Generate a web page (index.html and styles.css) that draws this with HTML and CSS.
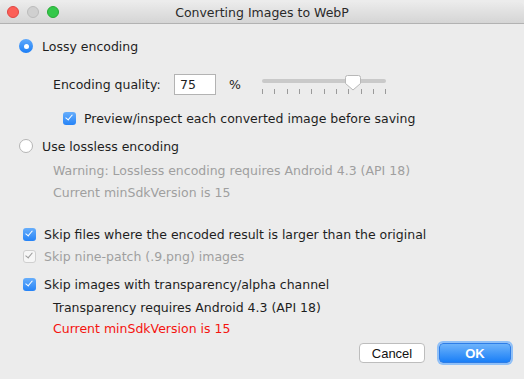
FILE: index.html
```html
<!DOCTYPE html>
<html lang="en">

<head>
    <meta charset="UTF-8">
    <title>Converting Images to WebP</title>
    <link rel="stylesheet" href="styles.css">
</head>

<body>
    <div class="window">
        <div class="titlebar">
            <div class="lights">
                <span class="light red"></span>
                <span class="light off"></span>
                <span class="light green"></span>
            </div>
            <div class="title">Converting Images to WebP</div>
        </div>

        <div class="content">
            <div class="row row-lossy">
                <span class="radio on"></span>
                <span>Lossy encoding</span>
            </div>

            <div class="row row-quality">
                <span class="q-label">Encoding quality:</span>
                <span class="q-input">75</span>
                <span class="q-pct">%</span>
                <svg class="slider" width="128" height="24" viewBox="0 0 128 24">
                    <rect x="2" y="4" width="124" height="4" rx="2" fill="#c9c9c9" />
                    <g stroke="#9a9a9a" stroke-width="1">
                        <line x1="2.5" y1="14" x2="2.5" y2="19" />
                        <line x1="14.5" y1="14" x2="14.5" y2="19" />
                        <line x1="27.5" y1="14" x2="27.5" y2="19" />
                        <line x1="39.5" y1="14" x2="39.5" y2="19" />
                        <line x1="51.5" y1="14" x2="51.5" y2="19" />
                        <line x1="64.5" y1="14" x2="64.5" y2="19" />
                        <line x1="76.5" y1="14" x2="76.5" y2="19" />
                        <line x1="88.5" y1="14" x2="88.5" y2="19" />
                        <line x1="101.5" y1="14" x2="101.5" y2="19" />
                        <line x1="113.5" y1="14" x2="113.5" y2="19" />
                        <line x1="125.5" y1="14" x2="125.5" y2="19" />
                    </g>
                    <path d="M87.5 0.5 h11 a2 2 0 0 1 2 2 v6 l-7.5 6.5 l-7.5 -6.5 v-6 a2 2 0 0 1 2 -2 z" fill="#fff" stroke="#b8b8b8" />
                </svg>
            </div>

            <div class="row row-preview">
                <span class="check on"></span>
                <span>Preview/inspect each converted image before saving</span>
            </div>

            <div class="row row-lossless">
                <span class="radio"></span>
                <span>Use lossless encoding</span>
            </div>

            <div class="note muted">
                <div>Warning: Lossless encoding requires Android 4.3 (API 18)</div>
                <div>Current minSdkVersion is 15</div>
            </div>

            <div class="row row-skip">
                <span class="check on"></span>
                <span>Skip files where the encoded result is larger than the original</span>
            </div>
            <div class="row row-nine muted">
                <span class="check disabled"></span>
                <span>Skip nine-patch (.9.png) images</span>
            </div>
            <div class="row row-alpha">
                <span class="check on"></span>
                <span>Skip images with transparency/alpha channel</span>
            </div>

            <div class="note note-alpha">
                <div>Transparency requires Android 4.3 (API 18)</div>
                <div class="error">Current minSdkVersion is 15</div>
            </div>

            <div class="buttons">
                <button class="btn cancel">Cancel</button>
                <button class="btn ok">OK</button>
            </div>
        </div>
    </div>
</body>

</html>
```

FILE: styles.css
```css
body {
    margin: 0;
    padding: 0;
    background-color: #ececec;
    font-family: "DejaVu Sans", sans-serif;
    font-size: 12.5px;
    color: #1e1e1e;
}

.window {
    width: 524px;
    height: 379px;
    background-color: #ececec;
    overflow: hidden;
}

.titlebar {
    position: relative;
    height: 21px;
    margin-top: 2px;
    background: linear-gradient(#ebebeb, #d5d5d5);
    border-bottom: 1px solid #b2b2b2;
    border-radius: 5px 5px 0 0;
    display: flex;
    align-items: center;
    justify-content: center;
}

.lights {
    position: absolute;
    left: 7px;
    top: 4px;
    display: flex;
    gap: 8px;
}

.light {
    width: 12px;
    height: 12px;
    border-radius: 50%;
    box-sizing: border-box;
}

.light.red {
    background-color: #fc5f57;
    border: 1px solid #df4744;
}

.light.off {
    background-color: #d0d0d0;
    border: 1px solid #bcbcbc;
}

.light.green {
    background-color: #34c84a;
    border: 1px solid #27aa35;
}

.title {
    font-size: 12.5px;
    color: #2a2a2a;
}

.content {
    padding: 12px 0 0 19px;
}

.row {
    display: flex;
    align-items: center;
    height: 20px;
}

.radio {
    width: 14px;
    height: 14px;
    border-radius: 50%;
    box-sizing: border-box;
    background-color: #fff;
    border: 1px solid #b5b5b5;
    margin-right: 9px;
    position: relative;
}

.radio.on {
    background: linear-gradient(#5fa9fb, #1b7ef6);
    border: none;
}

.radio.on::after {
    content: "";
    position: absolute;
    left: 4.5px;
    top: 4.5px;
    width: 5px;
    height: 5px;
    border-radius: 50%;
    background-color: #fff;
}

.check {
    width: 13px;
    height: 13px;
    border-radius: 3px;
    box-sizing: border-box;
    margin-right: 8px;
    position: relative;
    flex-shrink: 0;
}

.check.on {
    background: linear-gradient(#67aefb, #2583f7);
}

.check.disabled {
    background-color: #f6f6f6;
    border: 1px solid #cfcfcf;
}

.check::after {
    content: "";
    position: absolute;
    left: 4px;
    top: 1.5px;
    width: 3px;
    height: 6px;
    border: solid #fff;
    border-width: 0 1.6px 1.6px 0;
    transform: rotate(40deg);
}

.check.disabled::after {
    left: 3px;
    top: 0.5px;
    border-color: #9a9a9a;
}

.row-quality {
    height: 22px;
    margin-top: 17px;
    padding-left: 34px;
}

.q-label {
    width: 121px;
}

.q-input {
    width: 42px;
    height: 21px;
    box-sizing: border-box;
    background-color: #fff;
    border: 1px solid #b3b3b3;
    padding-left: 5px;
    line-height: 19px;
}

.q-pct {
    margin-left: 13px;
}

.slider {
    align-self: flex-start;
    margin-left: 19px;
    margin-top: 2px;
}

.row-preview {
    margin-top: 13px;
    padding-left: 44px;
}

.row-lossless {
    margin-top: 8px;
}

.note {
    padding-left: 34px;
    line-height: 22px;
}

.muted {
    color: #9f9f9f;
}

.note.muted {
    margin-top: 4px;
}

.row-skip {
    margin-top: 20px;
    padding-left: 4px;
}

.row-nine {
    margin-top: 2px;
    padding-left: 4px;
}

.row-alpha {
    margin-top: 8px;
    padding-left: 4px;
}

.note-alpha {
    margin-top: 3px;
    color: #1e1e1e;
    line-height: 21px;
}

.error {
    color: #f5130f;
}

.buttons {
    display: flex;
    justify-content: flex-end;
    gap: 14px;
    padding-right: 13px;
    margin-top: 4px;
}

.btn {
    font-family: "Liberation Sans", Arial, sans-serif;
    font-size: 13px;
    height: 20px;
    border-radius: 4px;
    padding: 0;
}

.cancel {
    width: 66px;
    background-color: #fff;
    border: 1px solid #bdbdbd;
    color: #111;
}

.ok {
    width: 72px;
    background: linear-gradient(#6db3fb, #1a7ff7);
    border: 1px solid #2e7de6;
    color: #fff;
    font-weight: bold;
    box-shadow: 0 0 0 2px #8fc0f8;
}
```
